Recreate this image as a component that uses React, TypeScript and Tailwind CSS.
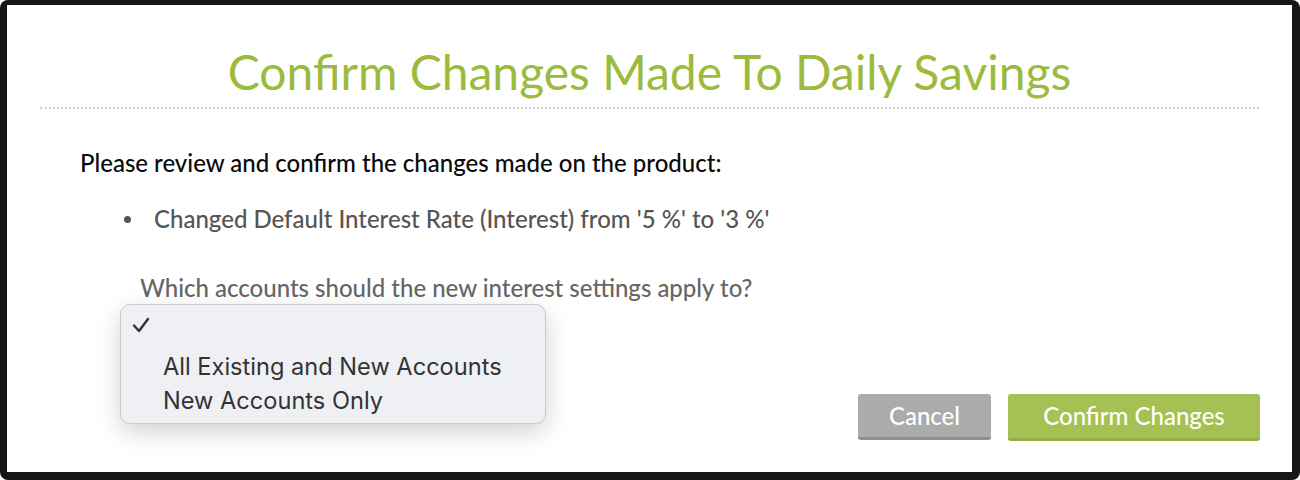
import React from 'react';

const options = ['All Existing and New Accounts', 'New Accounts Only'];

export default function App() {
  return (
    <div className="h-[480px] w-[1300px] bg-[#161616] pt-[5px] pl-[7px] pr-[8px] pb-[8px] rounded-[8px]">
      <div className="relative h-full bg-white font-['Lato','Open_Sans',sans-serif]">
        {/* header */}
        <div className="px-[33px] pt-[37px]">
          <h1 className="text-center text-[48px] leading-[60px] text-[#9cbb3d]">
            Confirm Changes Made To Daily Savings
          </h1>
          <div className="mt-[5px] border-t-2 border-dotted border-[#cfcfcf]" />
        </div>

        {/* body */}
        <div className="pl-[73px] pt-[39px] font-medium">
          <p className="text-[24px] leading-[30px] text-[#0a0a0a]">
            Please review and confirm the changes made on the product:
          </p>
          <ul className="mt-[26px] pl-[44px] text-[24px] leading-[30px] text-[#555]">
            <li className="flex items-center">
              <span className="mr-[23px] h-[7px] w-[7px] rounded-full bg-[#555]" />
              Changed Default Interest Rate (Interest) from '5 %' to '3 %'
            </li>
          </ul>
          <p className="mt-[39px] pl-[60px] text-[24px] leading-[30px] text-[#666]">
            Which accounts should the new interest settings apply to?
          </p>
        </div>

        {/* footer buttons */}
        <div className="absolute right-[32px] bottom-[31px] flex gap-[17px] font-medium">
          <button className="h-[46px] w-[133px] rounded-[3px] bg-[#ababab] border-b-[3px] border-[#8e8e8e] text-[24px] text-white">
            Cancel
          </button>
          <button className="h-[47px] w-[252px] rounded-[3px] bg-[#a6c153] border-b-[3px] border-[#93ad44] text-[24px] text-white">
            Confirm Changes
          </button>
        </div>

        {/* open select menu */}
        <div className="absolute left-[113px] top-[299px] w-[426px] h-[120px] rounded-[10px] border border-[#c9cbcf] bg-[#eef0f3] shadow-[0_8px_24px_rgba(0,0,0,0.18)] font-['Inter','Liberation_Sans',sans-serif] text-[#333] text-[23.6px]">
          <div className="h-[45px] pl-[10px] pt-[10px]">
            <svg width="20" height="20" viewBox="0 0 20 20" fill="none" stroke="#333" strokeWidth="2.4" strokeLinecap="round" strokeLinejoin="round">
              <path d="M3 10.5 L8 16 L17 4" />
            </svg>
          </div>
          <div className="pl-[42px] leading-[34px]">
            {options.map((o) => (
              <div key={o}>{o}</div>
            ))}
          </div>
        </div>
      </div>
    </div>
  );
}
